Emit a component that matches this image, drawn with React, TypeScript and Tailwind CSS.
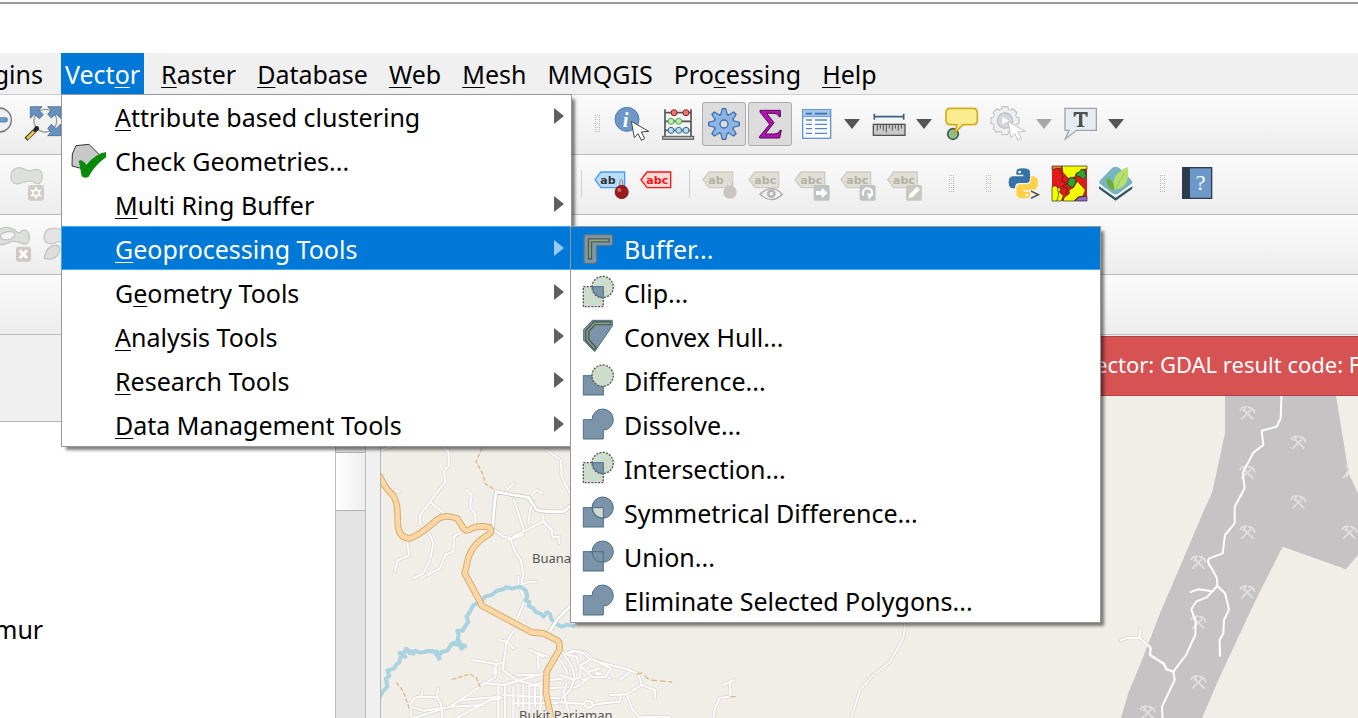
import React from "react";

type IconProps = { box: string; className?: string; children: React.ReactNode };

function Icon({ box, className = "size-11", children }: IconProps) {
  return (
    <svg viewBox={box} className={`${className} block shrink-0`} aria-hidden="true">
      {children}
    </svg>
  );
}

function Tool({ label, box, active, children }: { label: string; box: string; active?: boolean; children: React.ReactNode }) {
  return (
    <button
      aria-label={label}
      className={
        active
          ? "flex size-11 shrink-0 items-center justify-center rounded-[3px] bg-[#dcdcdc] outline outline-1 -outline-offset-1 outline-[#acacac]"
          : "flex size-11 shrink-0 items-center justify-center"
      }
    >
      <Icon box={box}>{children}</Icon>
    </button>
  );
}

function Drop({ label, dim }: { label: string; dim?: boolean }) {
  return (
    <button aria-label={label} className="flex h-11 w-6 shrink-0 items-center justify-center">
      <svg viewBox="0 0 16 10" className="h-[10px] w-4" aria-hidden="true">
        <path d="M0 0h16L8 10z" fill={dim ? "#a6a6a6" : "#555"} />
      </svg>
    </button>
  );
}

function Handle({ className }: { className: string }) {
  const rows = [0, 2, 4, 6, 8, 10, 12, 14, 16];
  return (
    <svg viewBox="0 0 5 18" className={`h-[18px] w-[5px] shrink-0 ${className}`} aria-hidden="true">
      {rows.map((y) => (
        <path key={y} d={`M0 ${y + 0.5}h1M4 ${y + 0.5}h1${y % 4 ? "" : `M2 ${y + 0.5}h1`}`} stroke="#b9b9b9" />
      ))}
    </svg>
  );
}

const barClass = "flex h-[60px] shrink-0 items-center border-b border-[#bcbcbc] bg-linear-to-b from-[#fbfbfb] to-[#ededed] pb-px";

function Cursor({ x, y, dim }: { x: number; y: number; dim?: boolean }) {
  return (
    <path
      transform={`translate(${x} ${y})`}
      d="M0 0L9 49L20 37L30 57L40 52L30 32L52 30Z"
      fill="#fff"
      stroke={dim ? "#c2c2c2" : "#444"}
      strokeWidth="3"
      strokeLinejoin="round"
    />
  );
}

function Tag({ x, text, fill, stroke, color }: { x: number; text: string; fill: string; stroke: string; color: string }) {
  return (
    <g transform={`translate(${x} 0)`}>
      <path d="M2 272L20 249H91V296H20Z" fill={fill} stroke={stroke} strokeWidth="4" />
      <text x="18" y="284" fontSize="33" fontWeight="700" fontFamily="DejaVu Sans, sans-serif" fill={color}>
        {text}
      </text>
    </g>
  );
}

function DimTag({ x, text = "abc" }: { x: number; text?: string }) {
  return <Tag x={x} text={text} fill="#e0dfd6" stroke="#cfcdc2" color="#b3b1a8" />;
}

function TopTools() {
  return (
    <div className={barClass} role="toolbar" aria-label="Attributes">
      <div className="flex w-[595px] shrink-0 items-center gap-0.5">
        <button aria-label="Zoom out" className="h-11 w-[18px] shrink-0">
          <Icon box="0 306 54 132" className="h-11 w-[18px]">
            <circle cx="-2" cy="360" r="36" fill="#eef0f1" stroke="#777" strokeWidth="4" />
            <rect x="-22" y="353" width="44" height="13" rx="4" fill="#6f9ccc" stroke="#466f9c" strokeWidth="2" />
          </Icon>
        </button>
        <Tool label="Zoom full" box="60 306 132 132">
          <circle cx="136" cy="362" r="34" fill="#f0f1f1" stroke="#999" strokeWidth="4" />
          <g fill="#6690bf" stroke="#33597f" strokeWidth="2">
            <path d="M91 320H126L117 331L130 344L118 356L103 343L91 355Z" />
            <path d="M182 320H143L153 331L143 343L154 354L168 342L182 355Z" />
            <path d="M182 407H143L153 397L143 385L154 373L168 386L182 372Z" />
          </g>
          <path d="M110 386L78 418" stroke="#333" strokeWidth="13" />
          <path d="M102 395L81 416" stroke="#f5c843" strokeWidth="8" />
          <circle cx="110" cy="385" r="7" fill="#222" />
        </Tool>
      </div>
      <Handle className="mr-[10px]" />
      <div className="flex items-center gap-0.5">
        <Tool label="Identify features" box="120 36 132 132">
          <circle cx="171" cy="88" r="36" fill="#6d97c6" stroke="#5681b1" strokeWidth="3" />
          <text x="158" y="110" fontSize="62" fontWeight="700" fontStyle="italic" fontFamily="Liberation Serif, serif" fill="#fff">
            i
          </text>
          <Cursor x={184} y={94} />
        </Tool>
        <Tool label="Field calculator" box="258 36 132 132">
          <path d="M285 58V140M363 58V140M285 68H363M285 94H363M285 121H363" stroke="#555" strokeWidth="5" fill="none" />
          <rect x="278" y="139" width="93" height="9" fill="#b5b5b5" stroke="#555" strokeWidth="3" />
          <g stroke="#a31313" strokeWidth="3" fill="#e17a7a">
            <circle cx="312" cy="68" r="9" />
            <circle cx="348" cy="68" r="9" />
          </g>
          <g stroke="#4ea34e" strokeWidth="3" fill="#bdeab5">
            <circle cx="303" cy="94" r="9" />
            <circle cx="326" cy="94" r="9" />
          </g>
          <g stroke="#2d668f" strokeWidth="3" fill="#b8dcf3">
            <circle cx="303" cy="121" r="9" />
            <circle cx="326" cy="121" r="9" />
            <circle cx="348" cy="121" r="9" />
          </g>
        </Tool>
        <Tool label="Processing toolbox" box="396 36 132 132" active>
          <g transform="translate(462 102)">
            {[0, 45, 90, 135, 180, 225, 270, 315].map((a) => (
              <path key={a} transform={`rotate(${a})`} d="M-10 -26L-5 -46H5L10 -26" fill="#8db4e2" stroke="#3d70b2" strokeWidth="4" strokeLinejoin="round" />
            ))}
            <circle r="30" fill="#8db4e2" stroke="#3d70b2" strokeWidth="4" />
            {[0, 45, 90, 135, 180, 225, 270, 315].map((a) => (
              <path key={a} transform={`rotate(${a})`} d="M-8 -24L-5 -40H5L8 -24Z" fill="#8db4e2" />
            ))}
            <circle r="12" fill="#dcdcdc" stroke="#3d70b2" strokeWidth="4" />
          </g>
        </Tool>
        <Tool label="Statistical summary" box="534 36 132 132" active>
          <path
            d="M570 61H631V80H627Q624 70 612 70H590L612 98L586 132H613Q626 132 630 121H634L629 144H569V139L599 103L570 66Z"
            fill="#b70fb7"
            stroke="#47104d"
            strokeWidth="3"
          />
        </Tool>
        <Tool label="Attribute table" box="672 36 132 132">
          <rect x="698" y="59" width="84" height="86" fill="#f8fbff" stroke="#6695c9" strokeWidth="4" />
          <path d="M700 61H780V78H700Z" fill="#9cc1e9" />
          <path d="M698 80H782" stroke="#6695c9" strokeWidth="3" />
          <path d="M708 71H726M735 71H771" stroke="#3f75b0" strokeWidth="5" />
          <path d="M708 90H726M735 90H771M708 103H726M735 103H771M708 116H726M735 116H771M708 130H726M735 130H771" stroke="#5a87b8" strokeWidth="4" />
        </Tool>
        <Drop label="Table options" />
        <Tool label="Measure line" box="18 36 132 132">
          <path d="M43 80H131M43 71V89M131 71V89" stroke="#3c5f86" strokeWidth="5" />
          <rect x="40" y="103" width="95" height="33" fill="#c9c9c9" stroke="#555" strokeWidth="4" />
          <path d="M52 105V122M61 105V116M70 105V122M79 105V128M88 105V116M97 105V122M106 105V116M115 105V122M124 105V116" stroke="#555" strokeWidth="3" />
        </Tool>
        <Drop label="Measure options" />
        <div className="w-0 shrink-0" />
        <Tool label="Map tips" box="240 36 132 132">
          <circle cx="279" cy="132" r="16" fill="#8bbf8c" stroke="#4a5a4a" strokeWidth="5" />
          <path d="M271 55H340Q352 55 352 68V90Q352 104 340 104H309L284 129L291 104H271Q258 104 258 90V68Q258 55 271 55Z" fill="#fbec8f" stroke="#cfac1c" strokeWidth="5" />
        </Tool>
        <Tool label="Run feature action" box="378 36 132 132">
          <g transform="translate(435 92)">
            {[0, 45, 90, 135, 180, 225, 270, 315].map((a) => (
              <path key={a} transform={`rotate(${a})`} d="M-12 -32L-8 -42H8L12 -32" fill="#efefef" stroke="#c6c6c6" strokeWidth="4" />
            ))}
            <circle r="33" fill="#efefef" />
            <circle r="23" fill="#d2d7db" stroke="#bcc2c6" strokeWidth="4" />
            <path d="M-8 -11L12 0L-8 11Z" fill="#fff" />
          </g>
          <Cursor x={444} y={94} dim />
        </Tool>
        <Drop label="Action options" dim />
        <Tool label="Text annotation" box="594 36 132 132">
          <path d="M615 55H709V121H650L616 147L627 121H615Z" fill="#e6edf2" stroke="#a0a5a8" strokeWidth="4" />
          <path d="M641 66H683V80H679Q678 72 671 72H667V104Q667 108 674 109V111H650V109Q657 108 657 104V72H653Q646 72 645 80H641Z" fill="#505050" />
        </Tool>
        <Drop label="Annotation options" />
      </div>
    </div>
  );
}

function LabelTools() {
  return (
    <div className={barClass} role="toolbar" aria-label="Labels">
      <div className="flex w-[581px] shrink-0 items-center gap-0.5 pl-[5px]">
        <Tool label="Add part" box="15 489 132 132">
          <path d="M48 508C66 500 75 518 94 515C113 506 127 514 127 532C127 549 116 559 104 551C91 540 73 549 59 553C42 558 32 547 33 531C33 518 38 512 48 508Z" fill="#dde0dd" stroke="#c9cdca" strokeWidth="4" />
          <rect x="84" y="558" width="48" height="47" rx="7" fill="#cfcdc4" />
          <path d="M108 565V599M93 573L123 591M93 591L123 573" stroke="#fff" strokeWidth="6" />
          <circle cx="108" cy="582" r="9" fill="#cfcdc4" stroke="#fff" strokeWidth="5" />
        </Tool>
      </div>
      <div className="mr-[6px] h-7 w-px shrink-0 bg-[#cfcfcf]" />
      <div className="flex items-center gap-0.5">
        <Tool label="Layer labeling" box="54 219 132 132">
          <Tag x={73} text="ab" fill="#b9dcfb" stroke="#4a9cf5" color="#333" />
          <path d="M150 304V278Q150 268 157 275L160 304" fill="#eee" stroke="#777" strokeWidth="3" />
          <circle cx="155" cy="309" r="20" fill="#9b1c1c" stroke="#701010" strokeWidth="2" />
          <circle cx="148" cy="303" r="6" fill="#cf6a6a" />
        </Tool>
        <Tool label="Diagram options" box="192 219 132 132">
          <Tag x={211} text="abc" fill="#fbdada" stroke="#fb1414" color="#fb1414" />
        </Tool>
      </div>
      <div className="mr-[6px] ml-[11px] h-7 w-px shrink-0 bg-[#cfcfcf]" />
      <div className="flex items-center gap-0.5">
        <Tool label="Pin labels" box="378 219 132 132">
          <DimTag x={397} text="ab" />
          <path d="M474 304V278Q474 268 481 275L484 304" fill="#eee" stroke="#ccc" strokeWidth="3" />
          <circle cx="480" cy="309" r="20" fill="#cac4c4" />
        </Tool>
        <Tool label="Show labels" box="516 219 132 132">
          <DimTag x={535} />
          <path d="M570 316Q605 282 637 316Q605 348 570 316Z" fill="#f2f2f2" stroke="#aaa" strokeWidth="4" />
          <circle cx="604" cy="314" r="13" fill="#b5b5b5" />
          <circle cx="604" cy="314" r="5" fill="#fff" />
        </Tool>
        <Tool label="Move label" box="654 219 132 132">
          <DimTag x={673} />
          <rect x="731" y="288" width="48" height="47" rx="6" fill="#c1c3c3" />
          <path d="M738 306H755V296L773 312L755 328V318H738Z" fill="#fff" />
        </Tool>
        <Tool label="Rotate label" box="792 219 132 132">
          <DimTag x={811} />
          <rect x="869" y="288" width="48" height="47" rx="6" fill="#c1c3c3" />
          <path d="M881 320A14 14 0 1 1 900 324" fill="none" stroke="#fff" strokeWidth="6" />
          <path d="M891 312L908 314L897 332Z" fill="#fff" />
        </Tool>
        <Tool label="Change label" box="60 219 132 132">
          <DimTag x={81} />
          <rect x="138" y="288" width="48" height="47" rx="6" fill="#c8c7c0" />
          <path d="M145 328L150 314L171 293L180 302L159 323Z" fill="#fff" />
        </Tool>
      </div>
      <Handle className="ml-[25px]" />
      <Handle className="mr-[11px] ml-[32px]" />
      <div className="flex items-center gap-0.5">
        <Tool label="Python console" box="426 219 132 132">
          <path d="M469 257V248Q469 238 488 238Q510 238 510 249V269Q510 282 498 282H476Q465 283 465 298H457Q446 297 446 280Q446 262 459 262H490V257Z" fill="#3672a5" />
          <circle cx="479" cy="249" r="4" fill="#fff" />
          <path d="M513 262H521Q534 264 534 283Q534 302 519 303H491V308H511V317Q511 328 490 328Q469 328 469 316V300Q469 286 482 286H501Q513 285 513 272Z" fill="#ffd146" />
          <circle cx="501" cy="318" r="4" fill="#fff" />
          <path d="M513 305L536 317L513 329" fill="none" stroke="#f7f7f7" strokeWidth="10" />
          <path d="M513 306L535 317L513 328" fill="none" stroke="#555" strokeWidth="5" />
        </Tool>
        <Tool label="Random cover" box="564 219 132 132">
          <rect x="576" y="231" width="105" height="105" fill="#e41a1a" />
          <g stroke="#222" strokeWidth="2" strokeLinejoin="round">
            <path d="M606 231H681V240L668 241L664 251L648 254L645 264L624 268L616 258L609 251Z" fill="#f3ff00" />
            <path d="M576 231H606L602 239L589 238L576 243Z" fill="#f08020" />
            <path d="M650 252L660 247L664 240L676 246V256L681 258L670 272L663 265L648 260Z" fill="#2da22d" />
            <path d="M624 275L632 265L648 269L645 287L636 296L623 287Z" fill="#2da22d" />
            <path d="M576 294L585 290L603 300L598 309L610 320L604 336H576Z" fill="#f3ff00" />
            <path d="M652 277L666 292L676 303L669 321L654 324L642 336H609L613 325L628 314L627 303L640 296Z" fill="#f3ff00" />
            <path d="M656 325L681 321V336H644Z" fill="#9566c8" />
            <path d="M600 243L609 265L604 275L620 284L606 293L622 297L618 316" fill="none" />
            <path d="M592 294L596 319L590 336" fill="none" />
          </g>
        </Tool>
        <Tool label="Leaf tools" box="702 219 132 132">
          <path d="M717 291V299L767 335L817 299V291L767 320Z" fill="#315763" />
          <path d="M717 284V291L767 326L817 291V284Z" fill="#fff" />
          <path d="M724 270L756 237Q767 229 778 237L813 272Q821 280 813 286L777 313Q767 320 757 313L721 286Q713 280 724 270Z" fill="#78b5c0" />
          <path d="M739 267Q761 270 764 302Q742 306 739 267Z" fill="#6eac38" />
          <path d="M803 234Q812 296 765 302Q748 258 803 234Z" fill="#b7df69" />
          <path d="M794 253L766 300" stroke="#87bd49" strokeWidth="2" />
        </Tool>
      </div>
      <Handle className="mr-[10px] ml-[22px]" />
      <Tool label="Help contents" box="525 39 132 132">
        <rect x="548" y="56" width="87" height="92" fill="#6c98ca" stroke="#333c4a" strokeWidth="4" />
        <path d="M548 56H570V148H548Z" fill="#2c3b4e" />
        <text x="587" y="123" fontSize="66" fontFamily="Liberation Serif, serif" fill="#fff">
          ?
        </text>
      </Tool>
    </div>
  );
}

function EditTools() {
  return (
    <div className={barClass} role="toolbar" aria-label="Digitizing">
      <button aria-label="Delete ring" className="mr-0.5 h-11 w-[35px] shrink-0">
        <Icon box="0 9 105 132" className="h-11 w-[35px]">
          <path d="M-4 33C15 18 40 27 54 41Q61 43 66 35Q84 28 88 52Q88 77 72 75Q60 71 50 68C30 63 20 80 -4 77Z" fill="#dcdfdc" stroke="#c3c6c3" strokeWidth="4" />
          <ellipse cx="23" cy="50" rx="22" ry="12" transform="rotate(-10 23 50)" fill="#f4f4f4" stroke="#c3c6c3" strokeWidth="4" />
          <rect x="48" y="83" width="45" height="45" rx="7" fill="#d3c8c8" />
          <path d="M59 94L81 117M81 94L59 117" stroke="#fff" strokeWidth="9" />
        </Icon>
      </button>
      <Tool label="Delete part" box="111 9 132 132">
        <path d="M133 48Q135 28 160 28Q180 29 200 34V70Q176 64 158 74Q130 77 133 48Z" fill="#e4e4e4" stroke="#c9c9c9" strokeWidth="4" />
        <path d="M133 118Q136 82 168 78Q188 84 172 110Q155 125 133 118Z" fill="#dcdfdc" stroke="#c3c6c3" strokeWidth="4" />
      </Tool>
    </div>
  );
}

const mid = { fill: "#7b94a9", stroke: "#4c7085", strokeWidth: 3 };
const ghost = { fill: "#cddccd", stroke: "#555", strokeWidth: 4, strokeDasharray: "6 4" };

const icons: Record<string, React.ReactNode> = {
  buffer: (
    <g transform="translate(-66 -18)">
      <path d="M78 44H151Q158 44 158 51V70Q158 77 151 77H110V123Q110 130 103 130H79Q72 130 72 123V51Q72 44 78 44Z" fill="#8096a8" stroke="#57758a" strokeWidth="4" />
      <path d="M90 119V61H149" fill="none" stroke="#4d5c53" strokeWidth="13" />
      <path d="M90 115V61H145" fill="none" stroke="#8fa884" strokeWidth="5" />
    </g>
  ),
  clip: (
    <g>
      <rect x="4" y="50" width="60" height="60" {...ghost} />
      <circle cx="62" cy="51" r="32" {...ghost} />
      <path d="M31 50H64V83Q34 82 31 50Z" {...mid} />
    </g>
  ),
  hull: (
    <g transform="translate(-66 -282)">
      <path d="M97 301H157V318L104 395L71 361V328Z" {...mid} />
      <path d="M153 310H103L82 333V360L107 387" fill="none" stroke="#44504a" strokeWidth="12" />
      <path d="M151 310H103L82 333V360L105 385" fill="none" stroke="#86a17b" strokeWidth="5" />
    </g>
  ),
  difference: (
    <g>
      <rect x="4" y="53" width="60" height="58" {...mid} />
      <circle cx="62" cy="53" r="32" {...ghost} />
    </g>
  ),
  dissolve: <path d="M4 53H30A32 32 0 1 1 64 85V111H4Z" {...mid} />,
  symmetrical: (
    <g>
      <rect x="4" y="53" width="60" height="58" {...mid} />
      <circle cx="62" cy="53" r="32" {...mid} />
      <path d="M31 53H64V85Q34 82 31 53Z" fill="#cddccd" stroke="#4c7085" strokeWidth="3" />
    </g>
  ),
  union: (
    <g>
      <rect x="4" y="53" width="60" height="58" {...mid} />
      <circle cx="62" cy="53" r="32" {...mid} />
      <path d="M31 53H64V85" fill="none" stroke="#4c7085" strokeWidth="3" />
    </g>
  ),
};

const geoprocessing: [string, string][] = [
  ["Buffer...", "buffer"],
  ["Clip...", "clip"],
  ["Convex Hull...", "hull"],
  ["Difference...", "difference"],
  ["Dissolve...", "dissolve"],
  ["Intersection...", "clip"],
  ["Symmetrical Difference...", "symmetrical"],
  ["Union...", "union"],
  ["Eliminate Selected Polygons...", "dissolve"],
];

/* An ampersand marks the access key that follows it. */
function Mnemonic({ text, className = "pt-0.5" }: { text: string; className?: string }) {
  const at = text.indexOf("&");
  if (at < 0) return <span className={className}>{text}</span>;
  return (
    <span className={className}>
      {text.slice(0, at)}
      <u className="decoration-1 underline-offset-[3px]">{text[at + 1]}</u>
      {text.slice(at + 2)}
    </span>
  );
}

const vectorItems = [
  "&Attribute based clustering",
  "Check Geometries...",
  "&Multi Ring Buffer",
  "&Geoprocessing Tools",
  "G&eometry Tools",
  "&Analysis Tools",
  "&Research Tools",
  "&Data Management Tools",
];

const rowClass = "flex h-11 w-full items-center border border-transparent text-left";
const rowActive = "flex h-11 w-full items-center border border-[#42a5f5] bg-[#0078d7] text-left text-white";
const labelClass = "pt-[3px]";

function VectorMenu() {
  return (
    <ul role="menu" className="absolute top-full left-0 z-10 w-[511px] bg-white pb-px text-black shadow-[4px_4px_3px_-1px_rgba(0,0,0,0.5)] outline outline-1 -outline-offset-1 outline-[#979797]">
      {vectorItems.map((item, i) => (
        <li key={item} role="none" className="relative">
          <button role="menuitem" className={i === 3 ? rowActive : rowClass}>
            <span className="flex w-[53px] shrink-0 pl-[8px]">
              {i === 1 && (
                <Icon box="210 414 108 132" className="h-11 w-9">
                  <path d="M228 437L267 433L298 464L290 490L262 510L216 498L217 462Z" fill="#c8c8c8" stroke="#333" strokeWidth="3" />
                  <path d="M236 483Q246 476 259 495Q285 462 318 456V472Q285 495 266 530Q255 537 245 529Q240 500 236 483Z" fill="#078a07" />
                </Icon>
              )}
            </span>
            <Mnemonic text={item} className={labelClass} />
            {i !== 1 && (
              <svg viewBox="0 0 10 16" className="mr-[7px] mb-px ml-auto h-4 w-[10px]" aria-hidden="true">
                <path d="M0 0L10 8L0 16Z" fill={i === 3 ? "#99c9ef" : "#5f5f5f"} />
              </svg>
            )}
          </button>
          {i === 3 && (
            <ul role="menu" className="absolute top-0 left-full -ml-[2px] w-[531px] bg-white pb-px shadow-[4px_4px_3px_-1px_rgba(0,0,0,0.5)] outline outline-1 -outline-offset-1 outline-[#979797]">
              {geoprocessing.map(([name, icon], j) => (
                <li key={name} role="none">
                  <button role="menuitem" className={j === 0 ? rowActive : rowClass}>
                    <span className="flex w-[53px] shrink-0 pl-[11px]">
                      <Icon box="0 0 96 132" className="h-11 w-8">
                        {icons[icon]}
                      </Icon>
                    </span>
                    <span className={labelClass}>{name}</span>
                  </button>
                </li>
              ))}
            </ul>
          )}
        </li>
      ))}
    </ul>
  );
}

const menuItem = "flex h-[41px] items-center px-1";

function MenuBar() {
  return (
    <nav className="flex h-[42px] shrink-0 gap-[13px] border-b border-[#cfcfcf] bg-[#f0f0f0]">
      <button className="flex h-[41px] w-12 items-center justify-end pr-[5px]">
        <span className="pt-0.5">gins</span>
      </button>
      <div className="relative">
        <button className="flex h-[41px] items-center bg-[#0078d7] px-1 text-white" aria-expanded="true">
          <Mnemonic text="Vect&or" />
        </button>
        <VectorMenu />
      </div>
      {["&Raster", "&Database", "&Web", "&Mesh", "MMQGIS", "Pro&cessing", "&Help"].map((m) => (
        <button key={m} className={menuItem}>
          <Mnemonic text={m} />
        </button>
      ))}
    </nav>
  );
}

const minorRoads = [
  "M235 30L238 75L222 95L226 125L180 185L150 225L150 250L180 285L190 310L180 360L160 400L130 415",
  "M180 185L222 220M150 415L210 385L225 345L250 335L252 290L275 275",
  "M110 300L118 345L82 362L75 395M75 150L90 158",
  "M290 150L305 165L300 200L316 225V252M30 32Q60 20 90 12M200 12Q225 20 235 40",
  "M372 270L400 290L420 293L435 335L452 360L460 400L452 450L465 480L440 540",
  "M432 180L445 220L460 265L458 285L415 300M490 185L480 210L475 250M430 290L520 245L545 270L548 292L568 290V310",
  "M520 225V245L550 275M410 150L432 130M485 165L500 150L518 160M530 30L572 60L575 110L600 160",
  "M445 410V440L475 425H500M410 605L430 575L465 545M385 600L410 605L430 625M410 605L398 690L440 720L530 745",
  "M305 660L380 672L398 670M380 672L370 700M380 690L375 712L345 730L240 800L130 834",
  "M340 730L400 735L470 715L520 700M275 780L390 770M215 805L160 812L120 800M385 740V834M405 738V834M430 740V834M445 735V800M460 735V834M478 738V834M495 740V800M512 735V834",
  "M120 795Q135 765 155 770L200 772Q220 790 215 834M155 770V750M200 772L205 745M120 795L125 834",
  "M440 705H510M475 740L540 720L620 710L630 690L620 650L590 645L560 625M520 650L480 630M505 690V640L535 650",
  "M400 765L570 775M430 790H570M560 645L590 690L585 834M590 645Q640 620 660 650L720 680M640 680L720 715M600 690L640 720L690 700",
  "M240 800L340 795M260 834L360 780L395 775M530 745L620 740L650 720",
];

const strip = [
  "M12 165Q40 145 70 160L85 175L130 190L200 207L235 222L245 255L285 270V295",
  "M15 170Q45 200 42 240L30 270L5 295M62 195L60 230L42 240L0 225M62 195L90 180M60 195L95 230L135 232L153 205L120 190M85 215L120 205",
  "M180 240L210 215M245 255L200 283L150 285M200 283L215 325L235 350L330 352M183 285L178 305L130 310L100 315M0 307L75 312",
  "M490 255L522 240M510 245L512 290L480 293L465 325L460 354",
  "M20 250L10 280L30 350M80 302Q100 302 98 318Q85 328 75 318Q70 308 80 302",
];

const picks: [number, number][] = [
  [502, 70], [655, 158], [502, 248], [655, 337], [502, 428], [808, 428],
  [355, 518], [502, 607], [355, 698], [355, 877], [203, 968],
];

const river =
  "M30 770L38 755L52 740L48 715L58 708L52 692L72 686L80 672L88 668L92 650L108 630L120 640L135 632L150 638L170 634L190 633L205 650L215 636L232 632L245 612L262 606L266 585L262 572L278 572L285 560L295 545L290 530L300 515L310 495L335 485L345 470L365 465L380 452L400 448L410 441L425 446L450 440L468 452L472 470L466 480L478 486L476 498L490 505L497 516L510 520L520 530L530 517L540 522L545 540L560 552L575 560L590 554L610 558";

function MapView() {
  return (
    <div className="relative min-h-0 flex-1 overflow-hidden bg-[#f1eee8]">
      <svg viewBox="381 396 977 322" preserveAspectRatio="xMinYMin slice" className="block size-full" role="img" aria-label="Map">
        <g transform="translate(1080 390) scale(.33333)">
          <path d="M435 0V130L397 305L366 375L300 530L240 670L190 800L145 910L115 1010H355L415 870L520 645L608 470L798 538L850 475V345L806 250L765 0Z" fill="#c5c3c4" />
          <path d="M798 225Q812 232 800 262M790 265L803 245" stroke="#e2e1e1" strokeWidth="5" fill="none" />
          {picks.map(([x, y]) => (
            <g key={`${x}-${y}`} transform={`translate(${x} ${y})`} fill="none" stroke="#e2e1e1" strokeWidth="5">
              <path d="M-18 18L11 -11M18 18L-11 -11M-22 -8Q-18 -20 -4 -19L-13 -6M2 -18Q19 -17 22 -1" />
            </g>
          ))}
          <path
            d="M122 752L145 743L178 743L212 773L210 795L250 820L260 838L280 845M178 743L182 715"
            fill="none"
            stroke="#d4d2d1"
            strokeLinejoin="round"
            strokeLinecap="round"
            strokeWidth="10"
          />
          <g fill="none" stroke="#fff" strokeLinejoin="round" strokeLinecap="round" strokeWidth="6">
            <path d="M605 0L602 85L590 110L545 122L550 165L520 188L488 250L494 295L464 350V400L435 435L428 490L388 505Q378 515 395 535L411 565L412 588L380 622L348 635L334 658L347 695L346 735L318 795L280 845L284 870L246 950L248 990" />
            <path d="M412 588L435 610L447 658L432 690L430 730L419 750L420 797M391 603L355 598L332 606" />
            <path d="M122 752L145 743L178 743L212 773L210 795L250 820L260 838L280 845M178 743L182 715" />
          </g>
        </g>
        <g transform="translate(370 440) scale(.33333)" fill="none" strokeLinejoin="round" strokeLinecap="round">
          {minorRoads.map((d) => <path key={d} d={d} stroke="#dddbd8" strokeWidth="11" />)}
          {minorRoads.map((d) => <path key={d} d={d} stroke="#fbfbfa" strokeWidth="6" />)}
          <path d={river} stroke="#aad3df" strokeWidth="12" />
          <path d="M108 628L130 640M250 610L285 618M265 600L275 625M200 635L208 655M90 640L105 650" stroke="#aad3df" strokeWidth="14" />
          <path d="M368 265L372 210L378 155L430 165L475 172L500 210L530 215H580L604 195M530 590L560 540L604 495" stroke="#cfcdca" strokeWidth="13" />
          <path d="M368 265L372 210L378 155L430 165L475 172L500 210L530 215H580L604 195M530 590L560 540L604 495" stroke="#fff" strokeWidth="8" />
          <path d="M335 25L318 65L340 105L345 130L375 150M248 718L300 702L320 715L332 745M80 728L100 755L118 805" stroke="#dcbb80" strokeWidth="4" strokeDasharray="10 9" />
          {["#d3ae70", "#fcd6a4"].map((c, i) => (
            <path
              key={c}
              d="M30 110Q45 145 68 165Q80 180 82 210L84 260Q90 296 120 295Q150 285 200 240Q225 220 262 236L280 265Q290 278 305 265Q330 255 358 262Q370 275 355 284Q310 310 296 350L284 400L325 475L335 497L485 577L520 580L560 600Q572 606 568 630L530 695L528 760L545 840"
              stroke={c}
              strokeWidth={i ? 14 : 20}
            />
          ))}
        </g>
        <g transform="translate(560 600) scale(.33333)" fill="none" strokeLinejoin="round" strokeLinecap="round">
          {strip.map((d) => <path key={d} d={d} stroke="#dddbd8" strokeWidth="11" />)}
          {strip.map((d) => <path key={d} d={d} stroke="#fbfbfa" strokeWidth="6" />)}
          <path d="M1037 60L1030 115L990 185L935 230L900 270L872 360" stroke="#dddbd8" strokeWidth="11" />
          <path d="M1037 60L1030 115L990 185L935 230L900 270L872 360" stroke="#f8f7f6" strokeWidth="6" />
          <path d="M232 222L245 219L268 240L335 246M512 290H528" stroke="#dcbb80" strokeWidth="4" strokeDasharray="14 12" />
        </g>
        <g fontFamily="Noto Sans, sans-serif" fontSize="13" fill="#555" stroke="#f1eee8" strokeWidth="2" paintOrder="stroke">
          <text x="532" y="563">Buana</text>
          <text x="519" y="720">Bukit Pariaman</text>
        </g>
      </svg>
    </div>
  );
}

export default function App() {
  return (
    <div className="flex h-screen flex-col overflow-hidden bg-[#f0f0f0] font-['Noto_Sans',sans-serif] text-[25px] text-black">
      <header className="h-[53px] shrink-0 bg-white pt-[2px]">
        <div className="h-[2px] bg-[#999]" />
      </header>
      <MenuBar />
      <TopTools />
      <LabelTools />
      <EditTools />
      <div className={barClass} />
      <main className="flex min-h-0 flex-1">
        <aside className="flex w-[366px] shrink-0 flex-col">
          <div className="h-[87px] shrink-0 border-b border-[#b4b4b4]" />
          <div className="flex min-h-0 flex-1">
            <div className="flex-1 overflow-hidden bg-white pt-[185px] leading-[44px]">
              <div className="-ml-[6px]">mur</div>
            </div>
            <div className="w-[31px] border-x border-[#bcbcbc] bg-[#e3e3e3] pt-[30px]">
              <div className="h-[59px] border-y border-[#b4b4b4] bg-linear-to-r from-white to-[#eee]" />
            </div>
          </div>
        </aside>
        <section className="ml-[14px] flex min-w-0 flex-1 flex-col border-l border-[#b4b4b4] pt-px">
          <div role="alert" className="flex h-[60px] shrink-0 items-center overflow-hidden border-y border-[#b24346] bg-[#d65253] pb-[3px] pl-[714px] text-[22px] whitespace-nowrap text-white">
            ector: GDAL result code: F
          </div>
          <MapView />
        </section>
      </main>
    </div>
  );
}
